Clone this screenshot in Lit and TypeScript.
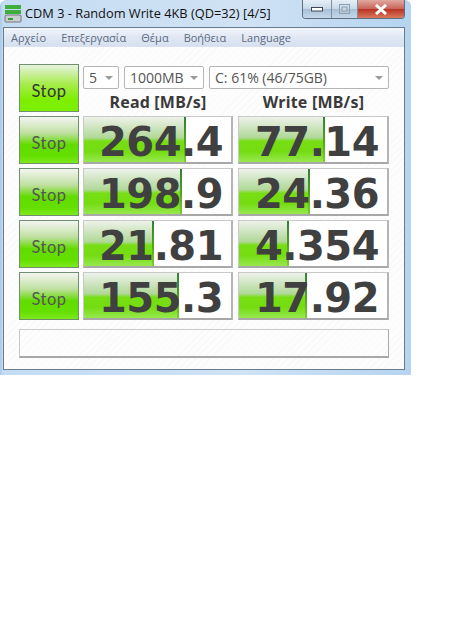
import { LitElement, html, css } from "lit";
import { customElement } from "lit/decorators.js";

const rows = [
  { read: "264.4", rw: 102, write: "77.14", ww: 86 },
  { read: "198.9", rw: 98, write: "24.36", ww: 71 },
  { read: "21.81", rw: 70, write: "4.354", ww: 50 },
  { read: "155.3", rw: 95, write: "17.92", ww: 68 },
];
const menu = ["Αρχείο", "Επεξεργασία", "Θέμα", "Βοήθεια", "Language"];

@customElement("app-root")
export class AppRoot extends LitElement {
  static styles = css`
    :host { display: block; width: 475px; height: 624px; background: #fff; overflow: hidden; font-family: "Open Sans", sans-serif; }
    .frame {
      width: 411px; height: 375px; box-sizing: border-box; padding: 0 6px 5px 3px;
      display: flex; flex-direction: column;
      background: linear-gradient(90deg, #a8c8e8 0, #c4dcf2 3px, #d0e2f4 60%, #b4d4f0 100%);
      border-radius: 6px 6px 0 0;
    }
    .title { height: 27px; display: flex; align-items: flex-start; flex: none; }
    .logo { margin: 5px 3px 0 1px; flex: none; }
    .cap { font-size: 12.8px; line-height: 16px; margin-top: 5px; color: #111; white-space: nowrap; flex: 1; }
    .ctl { display: flex; height: 18px; border: 1px solid #5f6f80; border-top: 0; border-radius: 0 0 4px 4px; overflow: hidden; flex: none; }
    .ctl div { height: 18px; display: flex; align-items: center; justify-content: center; border-right: 1px solid #7f8f9f; background: linear-gradient(#e6eff7, #c6d8e8 50%, #a8c0d6 52%, #c4d8ea); }
    .min { width: 28px; } .max { width: 25px; }
    .close { width: 46px; border-right: 0 !important; background: linear-gradient(#e0a9a0, #c9655a 48%, #b83324 52%, #d97a5e) !important; }
    .client { flex: 1; border: 1px solid #6a7c8c; background: #fdfdfd repeating-linear-gradient(135deg, #fdfdfd 0 4px, #f9f9f9 4px 5px); display: flex; flex-direction: column; }
    .menu { height: 19px; flex: none; display: flex; gap: 15px; padding-left: 7px; align-items: center; font-size: 11px; color: #5b6b80; background: linear-gradient(#f2f5fb, #dfe7f3 50%, #d6e0ef); }
    .body { padding: 17px 15px 0; display: grid; grid-template-columns: 60px 150px 152px; column-gap: 4px; row-gap: 4px; }
    .top { grid-column: 2 / 4; display: flex; flex-direction: column; }
    .selects { display: flex; gap: 5px; height: 23px; margin-top: 2px; }
    .sel { box-sizing: border-box; border: 1px solid #b5b5b5; border-radius: 2px; background: #fff; font-size: 14px; color: #555; display: flex; align-items: center; justify-content: space-between; padding: 0 5px; }
    .arrow { width: 0; height: 0; border: 4px solid transparent; border-top: 4px solid #9a9a9a; border-bottom: 0; }
    .heads { display: grid; grid-template-columns: 150px 152px; column-gap: 4px; margin-top: 3px; }
    .heads div { text-align: center; font: bold 16px/20px "Noto Sans", sans-serif; letter-spacing: .2px; color: #3a3a3a; }
    .heads div + div { margin-left: 1px; }
    .btn { box-sizing: border-box; height: 48px; padding-top: 5px; border: 1px solid #6f8f6f; display: flex; align-items: center; justify-content: center; font: 16.5px "Lato", sans-serif; letter-spacing: .5px; color: #555; background: linear-gradient(#f4f6f2, #bfe0a0 35%, #62dc00 60%, #64e000 85%, #7fe820); }
    .btn.big { background: linear-gradient(#e8f2e0, #a8ec50 40%, #7fee00 75%, #7cf000); color: #333; }
    .cell { box-sizing: border-box; height: 48px; border: 1px solid #c9c9c9; border-bottom: 2px solid #a8a8a8; border-right: 2px solid #b5b5b5; background: #fff; position: relative; overflow: hidden; display: flex; align-items: center; justify-content: flex-end; padding: 4px 8px 0 0; }
    .cell.w { margin-left: 1px; }
    .bar { position: absolute; left: 0; top: 0; bottom: 0; box-sizing: border-box; border-right: 2px solid; border-image: linear-gradient(#2f7f3a, #4f9f20 50%, #7fd030) 1; background: linear-gradient(#eef2ea, #b0d898 46%, #76de12 54%, #74dc10 76%, #98e850); }
    .num { position: relative; font: bold 40px/1 "DejaVu Sans", sans-serif; letter-spacing: -.5px; color: #404040; white-space: nowrap; }
    .msg { grid-column: 1 / 4; box-sizing: border-box; height: 29px; margin-top: 5px; border: 1px solid #c9c9c9; border-bottom: 2px solid #a8a8a8; border-right-color: #a8a8a8; }
  `;

  render() {
    return html`<div class="frame">
      <div class="title">
        <svg class="logo" width="18" height="18" viewBox="0 0 18 18">
          <rect x="1" y="0" width="16" height="4" fill="#3fae3f"/>
          <rect x="1" y="5" width="16" height="4" fill="#3fae3f"/>
          <rect x="1" y="10" width="16" height="7" rx="1" fill="#c9ced2" stroke="#777"/>
          <rect x="4" y="13" width="5" height="2" fill="#3c9c3c"/>
        </svg>
        <div class="cap">CDM 3 - Random Write 4KB (QD=32) [4/5]</div>
        <div class="ctl">
          <div class="min"><svg width="12" height="5"><rect x=".5" y=".5" width="11" height="3.5" fill="#fff" stroke="#445"/></svg></div>
          <div class="max"><svg width="11" height="10"><rect x=".5" y=".5" width="10" height="9" fill="none" stroke="#8fa0b0"/><rect x="3" y="3" width="5" height="4" fill="#c8d6e4" stroke="#8fa0b0"/></svg></div>
          <div class="close"><svg width="14" height="11" viewBox="0 0 14 11"><path d="M2 1l10 9M12 1L2 10" stroke="#fff" stroke-width="3"/></svg></div>
        </div>
      </div>
      <div class="client">
        <div class="menu">${menu.map((m) => html`<span>${m}</span>`)}</div>
        <div class="body">
          <div class="btn big">Stop</div>
          <div class="top">
            <div class="selects">
              <div class="sel" style="width:36px">5<i class="arrow"></i></div>
              <div class="sel" style="width:80px">1000MB<i class="arrow"></i></div>
              <div class="sel" style="width:180px">C: 61% (46/75GB)<i class="arrow"></i></div>
            </div>
            <div class="heads"><div>Read [MB/s]</div><div>Write [MB/s]</div></div>
          </div>
          ${rows.map((r) => html`
            <div class="btn">Stop</div>
            <div class="cell"><div class="bar" style="width:${r.rw}px"></div><span class="num">${r.read}</span></div>
            <div class="cell w"><div class="bar" style="width:${r.ww}px"></div><span class="num">${r.write}</span></div>
          `)}
          <div class="msg"></div>
        </div>
      </div>
    </div>`;
  }
}
